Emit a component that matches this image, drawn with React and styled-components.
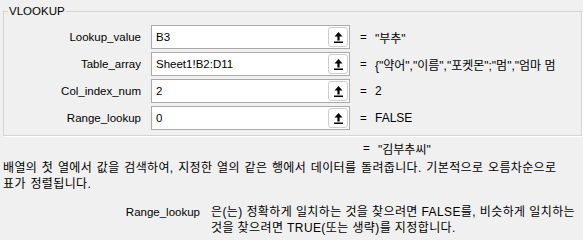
import React from 'react';
import styled, { createGlobalStyle } from 'styled-components';

const Global = createGlobalStyle`
  html, body { margin: 0; padding: 0; background: #f0f0f0; }
  body {
    font-family: "Liberation Sans", "Noto Sans CJK KR", sans-serif;
    font-size: 11.5px;
    color: #000;
  }
`;

const Page = styled.div`
  width: 583px;
  height: 240px;
  box-sizing: border-box;
  padding: 3px 1px 0 3px;
  overflow: hidden;
`;

const Group = styled.fieldset`
  margin: 0;
  padding: 6px 0 5px 0;
  width: 579px;
  box-sizing: border-box;
  min-width: 0;
  border: 1px solid #d5d5d5;
  box-shadow: 1px 1px 0 #ffffff;
  display: flex;
  flex-direction: column;
  gap: 3px;
`;

const Legend = styled.legend`
  margin-left: 4px;
  padding: 0 1px;
  line-height: 16px;
  font-size: 11.5px;
`;

const Row = styled.div`
  display: grid;
  grid-template-columns: 137px 199px 1fr;
  column-gap: 10px;
  align-items: center;
  height: 24px;
`;

const Label = styled.span`
  text-align: right;
  white-space: nowrap;
`;

const Box = styled.div`
  height: 24px;
  box-sizing: border-box;
  border: 1px solid #a9a9a9;
  background: #fff;
  display: flex;
  align-items: center;
  justify-content: space-between;
  padding: 0 1px 0 4px;
`;

const BoxText = styled.span`
  white-space: nowrap;
  overflow: hidden;
`;

const RefButton = styled.div`
  width: 20px;
  height: 20px;
  box-sizing: border-box;
  border: 1px solid #cdcdcd;
  border-radius: 3px;
  background: #fff;
  display: flex;
  align-items: center;
  justify-content: center;
  flex: none;
`;

const Result = styled.div`
  display: flex;
  align-items: center;
  white-space: nowrap;
  overflow: hidden;
  min-width: 0;
`;

const Eq = styled.span`
  width: 8px;
  flex: none;
`;

const Value = styled.span`
  margin-left: 7px;
  font-size: 12px;
  overflow: hidden;
`;

const ResultRow = styled.div`
  display: grid;
  grid-template-columns: 137px 199px 1fr;
  column-gap: 10px;
  align-items: center;
  height: 16px;
  padding-left: 4px;
  margin-top: 4px;
`;

const Description = styled.div`
  margin-top: 4px;
  font-size: 12px;
  line-height: 16px;
  word-spacing: 1px;
  letter-spacing: 0.35px;
`;

const Line = styled.span`
  display: block;
  white-space: nowrap;
`;

const ArgHelp = styled.div`
  margin-top: 12px;
  display: grid;
  grid-template-columns: 197px 1fr;
  column-gap: 11px;
  line-height: 16px;
`;

const ArgName = styled.span`
  text-align: right;
`;

const ArgText = styled.div`
  font-size: 12px;
  letter-spacing: 0.4px;
`;

const UpArrow = () => (
  <svg width="9" height="11" viewBox="0 0 9 11">
    <path d="M4.5 0 L8.5 4.5 L5.6 4.5 L5.6 8.5 L3.4 8.5 L3.4 4.5 L0.5 4.5 Z" fill="#000" />
    <rect x="0" y="9.5" width="9" height="1.5" fill="#000" />
  </svg>
);

const args = [
  { name: 'Lookup_value', input: 'B3', value: '"부추"' },
  { name: 'Table_array', input: 'Sheet1!B2:D11', value: '{"약어","이름","포켓몬";"멈","엄마 멈' },
  { name: 'Col_index_num', input: '2', value: '2' },
  { name: 'Range_lookup', input: '0', value: 'FALSE' },
];

export default function App() {
  return (
    <>
      <Global />
      <Page>
        <Group>
          <Legend>VLOOKUP</Legend>
          {args.map(a => (
            <Row key={a.name}>
              <Label>{a.name}</Label>
              <Box>
                <BoxText>{a.input}</BoxText>
                <RefButton>
                  <UpArrow />
                </RefButton>
              </Box>
              <Result>
                <Eq>=</Eq>
                <Value>{a.value}</Value>
              </Result>
            </Row>
          ))}
        </Group>
        <ResultRow>
          <span />
          <span />
          <Result>
            <Eq>=</Eq>
            <Value>"김부추씨"</Value>
          </Result>
        </ResultRow>
        <Description>
          <Line>배열의 첫 열에서 값을 검색하여, 지정한 열의 같은 행에서 데이터를 돌려줍니다. 기본적으로 오름차순으로</Line>
          <Line>표가 정렬됩니다.</Line>
        </Description>
        <ArgHelp>
          <ArgName>Range_lookup</ArgName>
          <ArgText>
            <Line>은(는) 정확하게 일치하는 것을 찾으려면 FALSE를, 비슷하게 일치하는</Line>
            <Line>것을 찾으려면 TRUE(또는 생략)를 지정합니다.</Line>
          </ArgText>
        </ArgHelp>
      </Page>
    </>
  );
}
